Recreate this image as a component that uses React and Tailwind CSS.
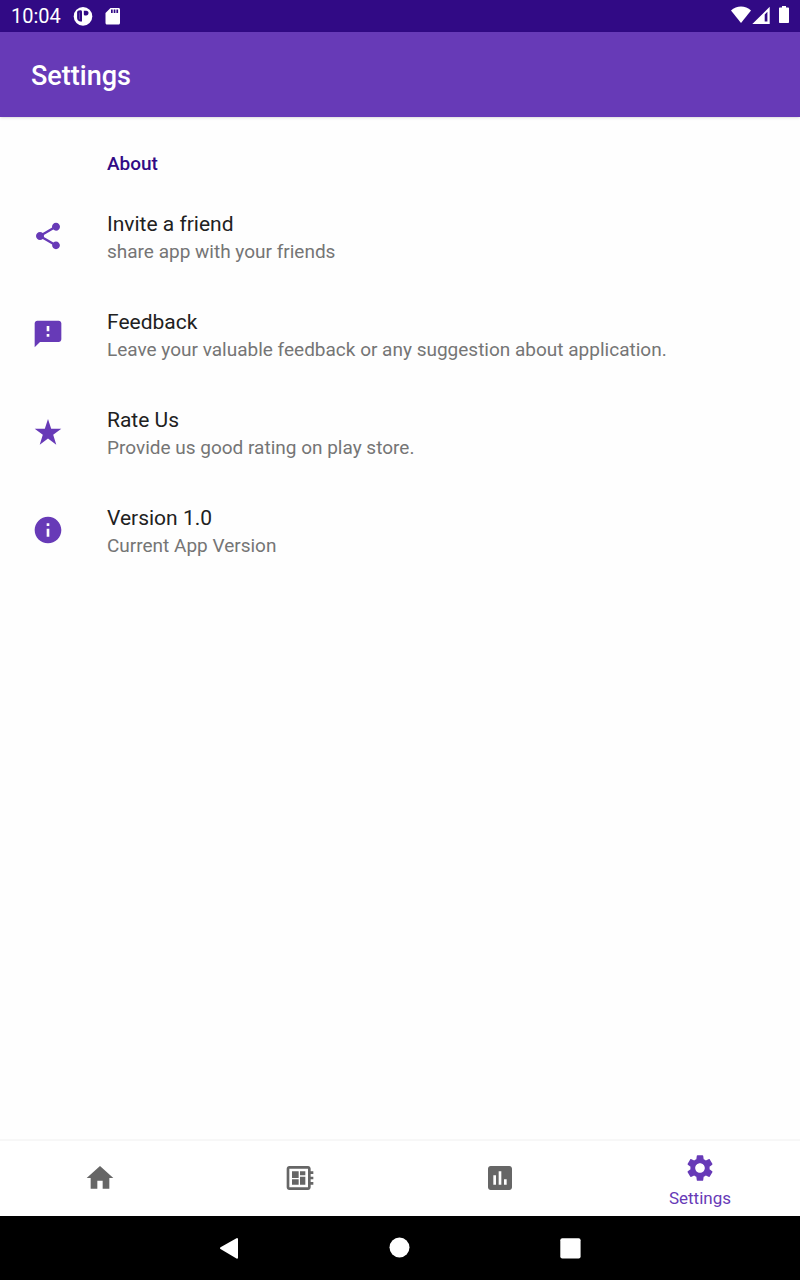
const paths = {
  share:
    'M18 16.08c-.76 0-1.44.3-1.96.77L8.91 12.7c.05-.23.09-.46.09-.7s-.04-.47-.09-.7l7.05-4.11c.54.5 1.25.81 2.04.81 1.66 0 3-1.34 3-3s-1.34-3-3-3-3 1.34-3 3c0 .24.04.47.09.7L8.04 9.81C7.5 9.31 6.79 9 6 9c-1.66 0-3 1.34-3 3s1.34 3 3 3c.79 0 1.5-.31 2.04-.81l7.12 4.16c-.05.21-.08.43-.08.65 0 1.61 1.31 2.92 2.92 2.92s2.92-1.31 2.92-2.92-1.31-2.92-2.92-2.92z',
  feedback:
    'M20 2H4c-1.1 0-1.99.9-1.99 2L2 22l4-4h14c1.1 0 2-.9 2-2V4c0-1.1-.9-2-2-2zm-7 12h-2v-2h2v2zm0-4h-2V6h2v4z',
  star: 'M12 2.2l2.4 7.3h7.6l-6.1 4.6 2.3 7.5-6.200-4.700-6.200 4.700 2.300-7.500L2 9.500h7.600z',
  info: 'M12 2C6.48 2 2 6.48 2 12s4.48 10 10 10 10-4.48 10-10S17.52 2 12 2zm1 15h-2v-6h2v6zm0-8h-2V7h2v2z',
  home: 'M10 20v-6h4v6h5v-8h3L12 3 2 12h3v8z',
  board:
    'M22 9V7h-2V5c0-1.1-.9-2-2-2H4c-1.1 0-2 .9-2 2v14c0 1.1.9 2 2 2h14c1.1 0 2-.9 2-2v-2h2v-2h-2v-2h2v-2h-2V9h2zm-4 10H4V5h14v14zM6 13h5v4H6v-4zm6-6h4v3h-4V7zM6 7h5v5H6V7zm6 4h4v6h-4v-6z',
  chart:
    'M19 3H5c-1.1 0-2 .9-2 2v14c0 1.1.9 2 2 2h14c1.1 0 2-.9 2-2V5c0-1.1-.9-2-2-2zM9 17H7v-7h2v7zm4 0h-2V7h2v10zm4 0h-2v-4h2v4z',
  gear:
    'M19.14 12.94c.04-.3.06-.61.06-.94 0-.32-.02-.64-.07-.94l2.03-1.58c.18-.14.23-.41.12-.61l-1.92-3.32c-.12-.22-.37-.29-.59-.22l-2.39.96c-.5-.38-1.03-.7-1.62-.94l-.36-2.54c-.04-.24-.24-.41-.48-.41h-3.84c-.24 0-.43.17-.47.41l-.36 2.54c-.59.24-1.13.57-1.62.94l-2.39-.96c-.22-.08-.47 0-.59.22L2.74 8.87c-.12.21-.08.47.12.61l2.03 1.58c-.05.3-.09.63-.09.94s.02.64.07.94l-2.03 1.58c-.18.14-.23.41-.12.61l1.92 3.32c.12.22.37.29.59.22l2.39-.96c.5.38 1.03.7 1.62.94l.36 2.54c.05.24.24.41.48.41h3.84c.24 0 .44-.17.47-.41l.36-2.54c.59-.24 1.13-.56 1.62-.94l2.39.96c.22.08.47 0 .59-.22l1.92-3.32c.12-.22.07-.47-.12-.61l-2.01-1.58zM12 15.6c-1.98 0-3.6-1.62-3.6-3.6s1.62-3.6 3.6-3.6 3.6 1.62 3.6 3.6-1.62 3.6-3.6 3.6z',
};

const rows = [
  { icon: 'share', title: 'Invite a friend', text: 'share app with your friends' },
  { icon: 'feedback', title: 'Feedback', text: 'Leave your valuable feedback or any suggestion about application.' },
  { icon: 'star', title: 'Rate Us', text: 'Provide us good rating on play store.' },
  { icon: 'info', title: 'Version 1.0', text: 'Current App Version' },
];

const tabs = [
  { icon: 'home', name: 'Home' },
  { icon: 'board', name: 'Dashboard' },
  { icon: 'chart', name: 'Statistics' },
  { icon: 'gear', name: 'Settings', active: true },
];

function Icon({ name }) {
  return (
    <svg className="size-8 shrink-0" viewBox="0 0 24 24" fill="currentColor" aria-hidden="true">
      <path fillRule="evenodd" d={paths[name]} />
    </svg>
  );
}

function StatusBar() {
  return (
    <div className="flex h-8 items-center bg-[#310a85] pr-2.5 pl-[11px] text-white">
      <span className="text-[20px] leading-8">10:04</span>
      <svg className="ml-3 size-5" viewBox="0 0 20 20" aria-hidden="true">
        <circle cx="10" cy="10.4" r="9.3" fill="#fff" />
        <path d="M7.400 4.300c1.100 0 1.600.6 1.600 1.600v9.600H7.200C5.200 15.300 4.100 13.800 4.100 12V6.500c0-1.400 1-2.200 3.300-2.200z" fill="#310a85" />
        <path d="M6.100 6.500h.9v6.800h-.9z" fill="#fff" opacity=".25" />
        <path d="M10.800 4.800h2.500c1.400 0 2.200.9 2.200 2.300s-.9 2.400-2.300 2.400h-.8c-1 0-1.600-.6-1.600-1.600z" fill="#310a85" />
      </svg>
      <svg className="ml-3 h-5 w-4" viewBox="0 0 16 20" aria-hidden="true">
        <path d="M5.500 2h8c.9 0 1.500.6 1.500 1.500v13.500c0 .9-.6 1.500-1.500 1.500H2C1.100 18.500.500 17.900.500 17V7z" fill="#fff" />
        <path d="M6 3.500h1.700v3.500H6zM8.700 3.500h1.700v3.500H8.700zM11.400 3.500h1.700v3.500h-1.700z" fill="#310a85" />
      </svg>
      <svg className="ml-auto h-5 w-[60px]" viewBox="0 0 60 20" aria-hidden="true">
        <path d="M1 4.500C6.500-.7 15.500-.7 21 4.500L11 17z" fill="#fff" />
        <path fillRule="evenodd" d="M39.700 .8V18H22.300zM37.400 5.700L34.700 8.500V15.600h2.700z" fill="#fff" />
        <path d="M52 0h4v1.500h2c.6 0 1 .4 1 1V16c0 .6-.4 1-1 1h-8c-.6 0-1-.4-1-1V2.500c0-.6.4-1 1-1h2z" fill="#fff" />
      </svg>
    </div>
  );
}

export default function App() {
  return (
    <div className="flex min-h-screen flex-col bg-[#fefefe] font-['Roboto',sans-serif]">
      <StatusBar />
      <header className="z-10 flex h-[85px] items-center bg-[#673ab7] px-[31px] pt-0.5 text-white shadow-sm">
        <h1 className="text-[27px] leading-8 font-medium">Settings</h1>
      </header>

      <main className="flex-1 pt-[22px]">
        <h2 className="flex h-12 items-center pt-0.5 pr-8 pl-[107px] text-[19px] font-medium text-[#310a85]">About</h2>
        <ul>
          {rows.map((row) => (
            <li key={row.title}>
              <button type="button" className="flex h-[98px] w-full items-center gap-[43px] px-8 text-left">
                <span className="text-[#673ab7]">
                  <Icon name={row.icon} />
                </span>
                <span className="flex flex-col pt-1">
                  <span className="text-[21px] leading-7 text-[#212121]">{row.title}</span>
                  <span className="text-[19px] leading-7 text-[#757575]">{row.text}</span>
                </span>
              </button>
            </li>
          ))}
        </ul>
      </main>

      <nav className="grid h-[77px] grid-cols-4 border-t-2 border-[#f7f7f7] bg-white">
        {tabs.map((tab) => (
          <a
            key={tab.name}
            href="#"
            aria-label={tab.name}
            className={
              tab.active
                ? 'flex flex-col items-center gap-1 pt-[11px] text-[#673ab7]'
                : 'flex flex-col items-center pt-[21px] text-[#666666]'
            }
          >
            <Icon name={tab.icon} />
            {tab.active && <span className="text-[17px] leading-5">{tab.name}</span>}
          </a>
        ))}
      </nav>

      <div className="flex h-16 items-center justify-center gap-[139px] bg-black">
        <button type="button" aria-label="Back">
          <svg className="size-8" viewBox="0 0 32 32" aria-hidden="true">
            <path d="M8 16.200L24 7V25.700z" fill="#fff" stroke="#fff" strokeWidth="2" strokeLinejoin="round" />
          </svg>
        </button>
        <button type="button" aria-label="Home">
          <svg className="size-8" viewBox="0 0 32 32" aria-hidden="true">
            <circle cx="15.500" cy="15.500" r="10" fill="#fff" />
          </svg>
        </button>
        <button type="button" aria-label="Recent apps">
          <svg className="size-8" viewBox="0 0 32 32" aria-hidden="true">
            <rect x="5.300" y="6.200" width="20.300" height="20.300" rx="2" fill="#fff" />
          </svg>
        </button>
      </div>
    </div>
  );
}
